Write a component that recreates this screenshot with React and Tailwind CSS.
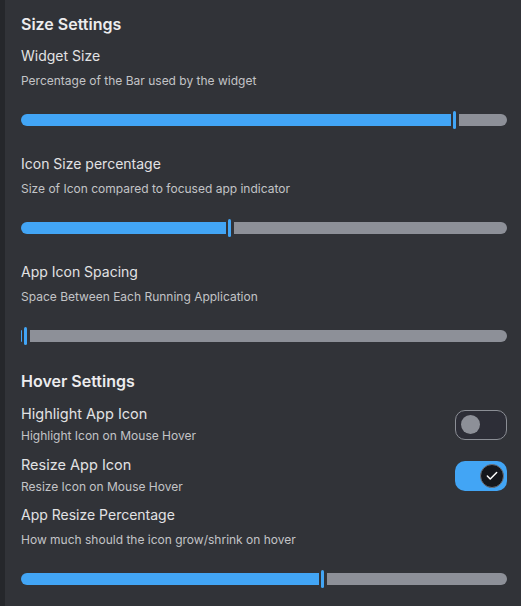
import { Check } from 'lucide-react';

const font = { fontFamily: 'Inter, "Noto Sans", sans-serif' };

function Slider({ value }) {
  return (
    <div className="flex h-[18px] items-center">
      <div
        className="h-3 rounded-l-full rounded-r-[2px] bg-[#42a5f5]"
        style={{ width: `${value}%` }}
      />
      <div className="ml-[2px] mr-[3px] h-[18px] w-[3px] shrink-0 rounded-full bg-[#42a5f5]" />
      <div className="h-3 flex-1 rounded-l-[2px] rounded-r-full bg-[#8d9098]" />
    </div>
  );
}

function SliderSetting({ title, description, value, className = '' }) {
  return (
    <div className={className}>
      <div className="text-[14px] leading-[22px] text-[#e2e2e4]">{title}</div>
      <div className="mt-[4px] text-[12px] leading-[20px] text-[#c3c4c7]">{description}</div>
      <div className="mt-[20px]">
        <Slider value={value} />
      </div>
    </div>
  );
}

function Toggle({ on }) {
  if (on) {
    return (
      <div className="flex h-[30px] w-[52px] shrink-0 items-center justify-end rounded-[10px] bg-[#42a5f5] pr-[3px]">
        <div className="flex h-[24px] w-[24px] items-center justify-center rounded-full border border-[#6d7077] bg-[#15171c]">
          <Check className="h-[14px] w-[14px] text-white" strokeWidth={2.5} />
        </div>
      </div>
    );
  }
  return (
    <div className="flex h-[30px] w-[52px] shrink-0 items-center rounded-[10px] border border-[#8b8e95] bg-[#2d2e37] pl-[5px]">
      <div className="h-[19px] w-[19px] rounded-full bg-[#8d9098]" />
    </div>
  );
}

function ToggleSetting({ title, description, on, className = '' }) {
  return (
    <div className={`flex items-center justify-between ${className}`}>
      <div>
        <div className="text-[14.5px] leading-[22px] text-[#e2e2e4]">{title}</div>
        <div className="mt-px text-[12px] leading-[20px] text-[#c3c4c7]">{description}</div>
      </div>
      <Toggle on={on} />
    </div>
  );
}

export default function App() {
  return (
    <div className="flex min-h-screen bg-[#313338]" style={font}>
      <div className="w-[5px] shrink-0 bg-[#25272b]" />
      <div className="flex-1 pl-4 pr-[14px] pt-3">
        <h2 className="text-[16px] font-semibold leading-[24px] text-[#ececee]">Size Settings</h2>
        <SliderSetting
          className="mt-[9px]"
          title="Widget Size"
          description="Percentage of the Bar used by the widget"
          value={88.5}
        />
        <SliderSetting
          className="mt-[24px]"
          title="Icon Size percentage"
          description="Size of Icon compared to focused app indicator"
          value={42.2}
        />
        <SliderSetting
          className="mt-[24px]"
          title="App Icon Spacing"
          description="Space Between Each Running Application"
          value={0.3}
        />
        <h2 className="mt-[24px] text-[16px] font-semibold leading-[24px] text-[#ececee]">Hover Settings</h2>
        <ToggleSetting
          className="mt-[10px]"
          title="Highlight App Icon"
          description="Highlight Icon on Mouse Hover"
          on={false}
        />
        <ToggleSetting
          className="mt-2"
          title="Resize App Icon"
          description="Resize Icon on Mouse Hover"
          on
        />
        <SliderSetting
          className="mt-[7px]"
          title="App Resize Percentage"
          description="How much should the icon grow/shrink on hover"
          value={61.3}
        />
      </div>
    </div>
  );
}
